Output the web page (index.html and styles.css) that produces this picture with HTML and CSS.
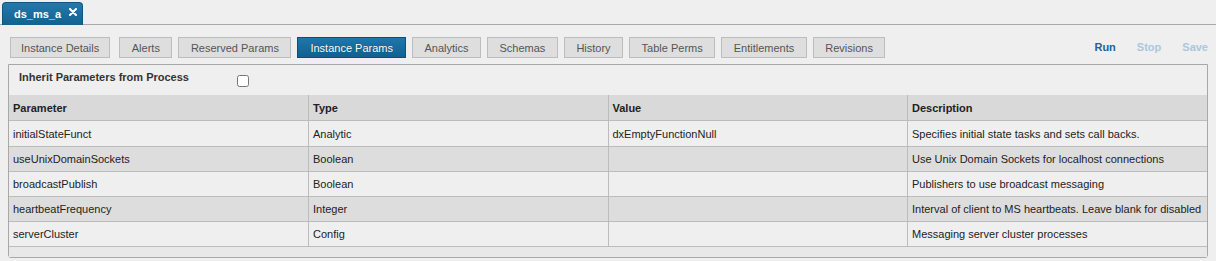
FILE: index.html
```html
<!DOCTYPE html>
<html lang="en">
<head>
    <meta charset="UTF-8">
    <title>ds_ms_a</title>
    <link rel="stylesheet" href="styles.css">
</head>
<body>
    <div class="tabbar">
        <div class="tab">
            <span>ds_ms_a</span>
            <svg class="tab-close" width="8" height="8" viewBox="0 0 8 8">
                <path d="M1 1 L7 7 M7 1 L1 7" stroke="white" stroke-width="2" stroke-linecap="round"/>
            </svg>
        </div>
    </div>

    <div class="toolbar">
        <div class="buttons">
            <button class="btn first">Instance Details</button>
            <button class="btn">Alerts</button>
            <button class="btn">Reserved Params</button>
            <button class="btn active">Instance Params</button>
            <button class="btn">Analytics</button>
            <button class="btn">Schemas</button>
            <button class="btn">History</button>
            <button class="btn">Table Perms</button>
            <button class="btn">Entitlements</button>
            <button class="btn">Revisions</button>
        </div>
        <div class="actions">
            <span class="action">Run</span>
            <span class="action disabled">Stop</span>
            <span class="action disabled">Save</span>
        </div>
    </div>

    <div class="panel">
        <div class="inherit">
            <label>Inherit Parameters from Process</label>
            <input type="checkbox" class="check">
        </div>
        <table class="params">
            <thead>
                <tr>
                    <th>Parameter</th>
                    <th>Type</th>
                    <th>Value</th>
                    <th>Description</th>
                </tr>
            </thead>
            <tbody>
                <tr>
                    <td>initialStateFunct</td>
                    <td>Analytic</td>
                    <td>dxEmptyFunctionNull</td>
                    <td>Specifies initial state tasks and sets call backs.</td>
                </tr>
                <tr>
                    <td>useUnixDomainSockets</td>
                    <td>Boolean</td>
                    <td></td>
                    <td>Use Unix Domain Sockets for localhost connections</td>
                </tr>
                <tr>
                    <td>broadcastPublish</td>
                    <td>Boolean</td>
                    <td></td>
                    <td>Publishers to use broadcast messaging</td>
                </tr>
                <tr>
                    <td>heartbeatFrequency</td>
                    <td>Integer</td>
                    <td></td>
                    <td>Interval of client to MS heartbeats. Leave blank for disabled</td>
                </tr>
                <tr>
                    <td>serverCluster</td>
                    <td>Config</td>
                    <td></td>
                    <td>Messaging server cluster processes</td>
                </tr>
            </tbody>
        </table>
        <div class="panel-footer"></div>
    </div>
</body>
</html>
```

FILE: styles.css
```css
body {
    margin: 0;
    background-color: #efefef;
    font-family: 'Liberation Sans', Arial, sans-serif;
    font-size: 11px;
    color: #222;
}
.tabbar {
    height: 22px;
    padding: 2px 0 0 2px;
    border-bottom: 1px solid #a9a9a9;
}
.tab {
    display: inline-flex;
    align-items: center;
    gap: 8px;
    box-sizing: border-box;
    height: 23px;
    padding: 0 5px 1px 11px;
    background: linear-gradient(#2379ad, #13618f);
    border: 1px solid #0f5580;
    border-bottom: none;
    border-radius: 4px 4px 0 0;
    color: white;
    font-size: 11px;
    font-weight: bold;
    white-space: nowrap;
}
.tab-close {
    flex-shrink: 0;
    margin-top: -3px;
}
.toolbar {
    display: flex;
    justify-content: space-between;
    align-items: center;
    padding: 12px 8px 0 10px;
}
.buttons {
    display: flex;
    gap: 6px;
}
.btn {
    height: 21px;
    padding: 0 11.5px;
    background-color: #dedede;
    border: 1px solid #bdbdbd;
    color: #555;
    font-family: inherit;
    font-size: 11px;
    cursor: pointer;
}
.btn.first {
    padding: 0 10px;
    margin-right: 3px;
}
.btn.active {
    padding: 0 12px;
    background: linear-gradient(#1f77ab, #11608f);
    border-color: #0c4f78;
    color: white;
    text-shadow: 0 0 1px rgba(0,0,0,0.4);
}
.actions {
    display: flex;
    gap: 21px;
    padding-bottom: 2px;
}
.action {
    font-weight: bold;
    color: #24628f;
}
.action.disabled {
    color: #a8c8de;
}
.panel {
    margin: 6px 8px 0 8px;
    border: 1px solid #a8a8a8;
    border-radius: 0 0 3px 3px;
}
.inherit {
    display: flex;
    align-items: center;
    height: 30px;
    padding-left: 10px;
}
.inherit label {
    font-weight: bold;
    color: #333;
    width: 218px;
    margin-top: -7px;
}
.check {
    margin: 2px 0 0 0;
    width: 12px;
    height: 12px;
}
.params {
    width: 100%;
    border-collapse: collapse;
    table-layout: fixed;
}
.params th,
.params td {
    height: 24px;
    padding: 0 4px;
    text-align: left;
    border-top: 1px solid #bcbcbc;
    border-left: 1px solid #bcbcbc;
    white-space: nowrap;
}
.params th:first-child,
.params td:first-child {
    border-left: none;
}
.params th {
    height: 25px;
    border-top: none;
    background-color: #d9d9d9;
    color: #222;
}
.params tbody tr:first-child td {
    height: 25px;
}
.params tbody tr:nth-child(odd) {
    background-color: #efefef;
}
.params tbody tr:nth-child(even) {
    background-color: #dddddd;
}
.panel-footer {
    height: 10px;
    border-top: 1px solid #bcbcbc;
    background-color: #e8e8e8;
}
```
